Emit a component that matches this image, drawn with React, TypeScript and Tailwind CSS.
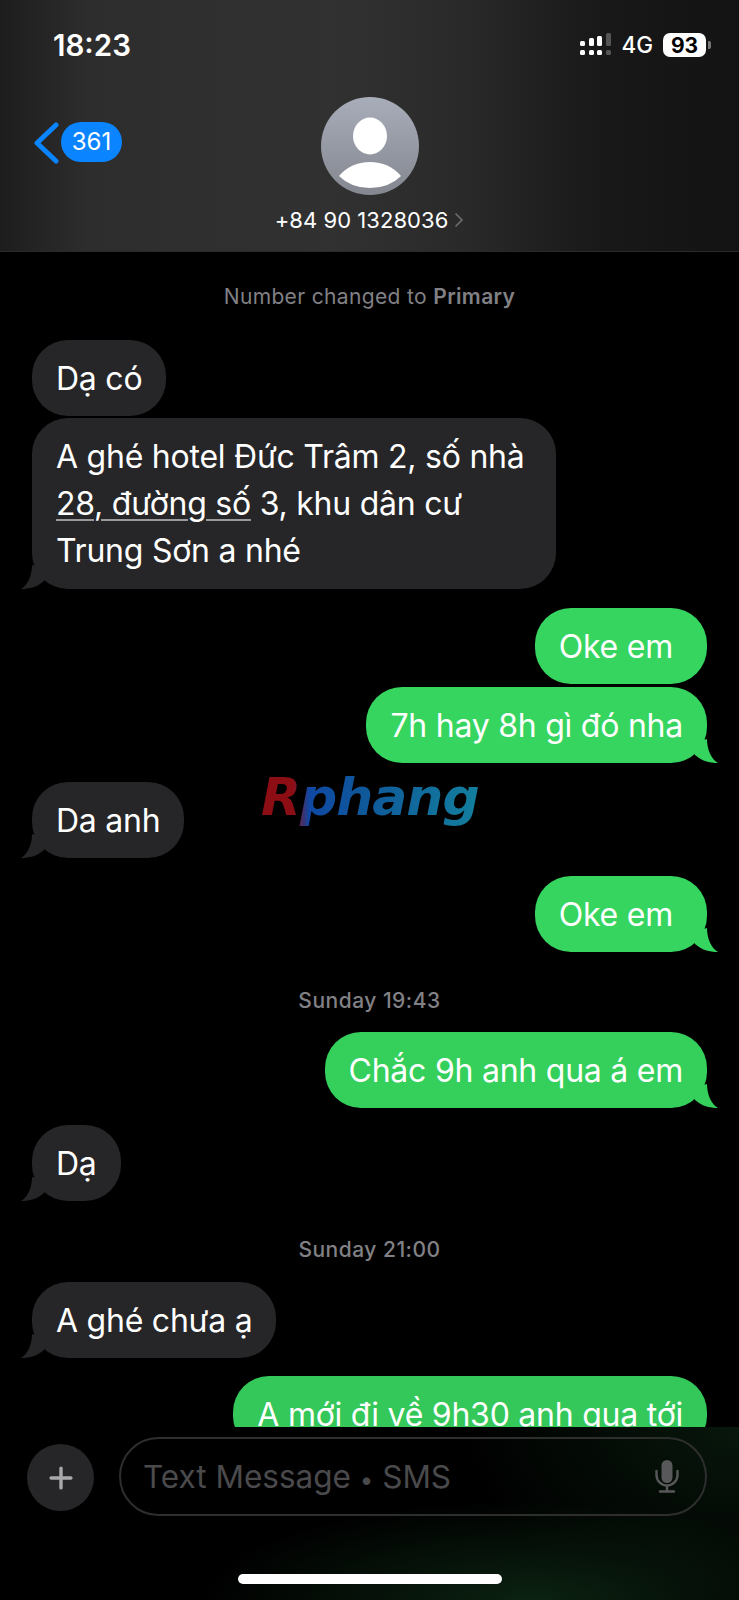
import { Plus } from "lucide-react"

const font = "font-['Inter','Noto_Sans',sans-serif]"

function LeftTail() {
  return (
    <svg className="absolute -left-[11px] bottom-0 h-[24px] w-[28px]" viewBox="0 0 28 24">
      <path d="M11 0 C11 10 7 20 0 24 C9 24 16 22 23 16 L28 5 Z" fill="#262628" />
    </svg>
  )
}

function RightTail({ color }: { color: string }) {
  return (
    <svg className="absolute -right-[11px] bottom-0 h-[24px] w-[28px]" viewBox="0 0 28 24" style={{ color }}>
      <path d="M17 0 C17 10 21 20 28 24 C19 24 12 22 5 16 L0 5 Z" fill="currentColor" />
    </svg>
  )
}

function Incoming({ children, tail, className = "" }: { children: React.ReactNode; tail?: boolean; className?: string }) {
  return (
    <div className={`relative ml-[32px] w-fit rounded-[36px] bg-[#262628] pl-[24px] text-[32px] leading-[47px] tracking-[-0.24px] text-white ${className}`}>
      {children}
      {tail && <LeftTail />}
    </div>
  )
}

function Outgoing({ children, tail, color = "#36d55f", className = "" }: { children: React.ReactNode; tail?: boolean; color?: string; className?: string }) {
  return (
    <div
      className={`relative ml-auto mr-[32px] w-fit rounded-[36px] py-[14.5px] pl-[24px] text-[32px] leading-[47px] tracking-[-0.24px] text-white ${className}`}
      style={{ backgroundColor: color }}
    >
      {children}
      {tail && <RightTail color={color} />}
    </div>
  )
}

function Signal() {
  return (
    <svg width="32" height="24" viewBox="0 0 32 24" className="mr-[9px]">
      <g fill="#fff">
        <rect x="0" y="8" width="5" height="5" rx="1.5" />
        <rect x="9" y="5" width="5" height="8" rx="1.5" />
        <rect x="17" y="3" width="5" height="10" rx="1.5" />
        <rect x="0" y="17" width="5" height="5" rx="1.5" />
        <rect x="9" y="17" width="5" height="5" rx="1.5" />
        <rect x="17" y="17" width="5" height="5" rx="1.5" />
      </g>
      <g fill="#555">
        <rect x="26" y="0" width="5" height="13" rx="1.5" />
        <rect x="26" y="17" width="5" height="5" rx="1.5" />
      </g>
    </svg>
  )
}

function Header() {
  return (
    <header className="h-[252px] border-b border-[#2a2a2a] bg-[linear-gradient(90deg,#1d1d1d_0%,#2d2d2d_12%,#313131_45%,#2a2a2a_62%,#181818_82%,#131313_100%)]">
      <div className="flex h-[97px] items-start justify-between pl-[53px] pr-[28px] pt-[29px]">
        <span className="text-[29.5px] font-semibold leading-[32px] text-white">18:23</span>
        <div className="flex items-center pt-[4px]">
          <Signal />
          <span className="mr-[10px] text-[22.5px] font-medium leading-[24px] text-white">4G</span>
          <div className="flex h-[24px] w-[43px] items-center justify-center rounded-[7px] bg-white text-[21px] font-bold leading-none text-black">93</div>
          <div className="ml-[2px] h-[8px] w-[3px] rounded-r-[2px] bg-[#777]" />
        </div>
      </div>
      <div className="grid grid-cols-[1fr_auto_1fr]">
        <div className="flex items-start pl-[33px] pt-[25px]">
          <svg width="26" height="42" viewBox="0 0 26 42" fill="none" stroke="#0a84ff" strokeWidth="5" strokeLinecap="round" strokeLinejoin="round">
            <path d="M23 3 L4 21 L23 39" />
          </svg>
          <span className="ml-[2px] flex h-[40px] w-[61px] items-center justify-center rounded-[20px] bg-[#0a84ff] text-[24px] text-white">361</span>
        </div>
        <div className="flex flex-col items-center">
          <div className="h-[98px] w-[98px] rounded-full bg-[linear-gradient(180deg,#a8adba,#84878f)]">
            <svg viewBox="0 0 98 98" className="h-full w-full" fill="#fff">
              <ellipse cx="49" cy="39" rx="17" ry="18.5" />
              <path d="M18 79 Q30 65 49 65 Q68 65 80 79 Q68 91 49 91 Q30 91 18 79 Z" />
            </svg>
          </div>
          <div className="mt-[12px] flex items-center text-[22px] leading-[26px] tracking-[0.05px] text-white">
            <span>+84 90 1328036</span>
            <svg width="10" height="16" viewBox="0 0 10 16" fill="none" stroke="#6e6e6e" strokeWidth="1.6" className="ml-[6px]">
              <path d="M1.5 1.5 L8 8 L1.5 14.5" />
            </svg>
          </div>
        </div>
        <div />
      </div>
    </header>
  )
}

function Stamp({ children, className = "" }: { children: React.ReactNode; className?: string }) {
  return <p className={`text-center text-[21px] leading-[26px] text-[#818185] ${className}`}>{children}</p>
}

function Composer() {
  return (
    <div className="absolute inset-x-0 bottom-0 flex h-[173px] items-start bg-[radial-gradient(ellipse_330px_100px_at_72%_100%,#0b2211_0%,transparent_100%),radial-gradient(ellipse_280px_170px_at_100%_0%,#08170c_0%,transparent_100%),linear-gradient(#000,#000)] pl-[27px] pr-[32px] pt-[10px]">
      <div className="mt-[7px] flex h-[67px] w-[67px] items-center justify-center rounded-full bg-[#262628]">
        <Plus size={34} strokeWidth={2.4} color="#a9a9ab" />
      </div>
      <div className="ml-[25px] flex h-[79px] flex-1 items-center justify-between rounded-[40px] border-2 border-[#2e2e2e] pl-[22px] pr-[26px]">
        <span className="text-[31.5px] text-[#4a4a4c]">
          Text Message <span className="text-[24px]">•</span> SMS
        </span>
        <svg width="24" height="33" viewBox="0 0 24 33" fill="none">
          <rect x="6.5" y="0" width="11" height="23" rx="5.5" fill="#58585a" />
          <path d="M1.5 11 V15 A10.5 10.5 0 0 0 22.5 15 V11 M12 26 V31 M5 31.5 H19" stroke="#58585a" strokeWidth="2.4" strokeLinecap="round" />
        </svg>
      </div>
      <div className="absolute bottom-[16px] left-[238px] h-[10px] w-[264px] rounded-full bg-white" />
    </div>
  )
}

export default function App() {
  return (
    <div className={`relative h-[1600px] w-[739px] overflow-hidden bg-black ${font}`}>
      <Header />
      <main>
        <Stamp className="mt-[32px] tracking-[0.35px]">
          Number changed to <span className="font-semibold">Primary</span>
        </Stamp>
        <Incoming className="mt-[30px] py-[14.5px] pr-[24px]">Dạ có</Incoming>
        <Incoming tail className="mt-[2px] py-[15px] pr-[32px]">
          <span className="block">A ghé hotel Đức Trâm 2, số nhà</span>
          <span className="block">
            <span className="underline decoration-[#9a9a9c] decoration-2 underline-offset-4">28, đường số</span> 3, khu dân cư
          </span>
          <span className="block">Trung Sơn a nhé</span>
        </Incoming>
        <Outgoing className="mt-[19px] pr-[34px]">Oke em</Outgoing>
        <Outgoing tail className="mt-[3px] pr-[24px]">7h hay 8h gì đó nha</Outgoing>
        <Incoming tail className="mt-[19px] py-[14.5px] pr-[24px]">Da anh</Incoming>
        <Outgoing tail className="mt-[18px] pr-[34px]">Oke em</Outgoing>
        <Stamp className="mt-[36px] font-medium tracking-[0.5px]">Sunday 19:43</Stamp>
        <Outgoing tail className="mt-[18px] pr-[24px]" color="#34d05b">Chắc 9h anh qua á em</Outgoing>
        <Incoming tail className="mt-[17px] py-[14.5px] pr-[24px]">Dạ</Incoming>
        <Stamp className="mt-[36px] font-medium tracking-[0.5px]">Sunday 21:00</Stamp>
        <Incoming tail className="mt-[19px] py-[14.5px] pr-[24px]">A ghé chưa ạ</Incoming>
        <Outgoing className="mt-[18px] pr-[24px]" color="#34c759">A mới đi về 9h30 anh qua tới</Outgoing>
      </main>
      <div className="pointer-events-none absolute left-[261px] top-[762px] bg-[linear-gradient(90deg,#8c0d14_0%,#8c0d14_15%,#0f48a3_22%,#0f5a9a_50%,#137f9e_100%)] bg-clip-text font-['DejaVu_Sans',sans-serif] text-[52px] font-bold italic leading-[70px] tracking-[-1px] text-transparent">
        Rphang
      </div>
      <Composer />
    </div>
  )
}
